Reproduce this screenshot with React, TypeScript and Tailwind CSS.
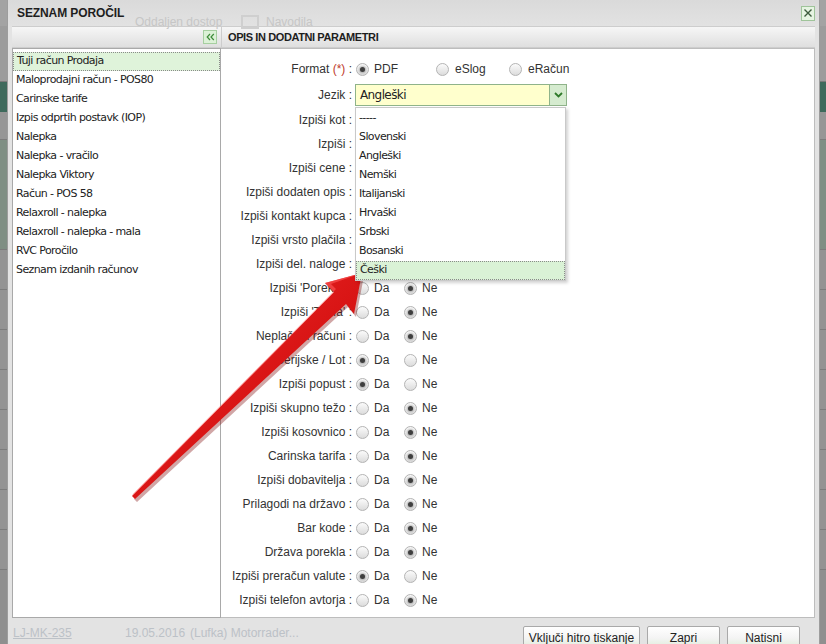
import React from "react";

const leftItems = [
  "Tuji račun Prodaja",
  "Maloprodajni račun - POS80",
  "Carinske tarife",
  "Izpis odprtih postavk (IOP)",
  "Nalepka",
  "Nalepka - vračilo",
  "Nalepka Viktory",
  "Račun - POS 58",
  "Relaxroll - nalepka",
  "Relaxroll - nalepka - mala",
  "RVC Poročilo",
  "Seznam izdanih računov",
];

const languages = [
  "-----",
  "Slovenski",
  "Angleški",
  "Nemški",
  "Italijanski",
  "Hrvaški",
  "Srbski",
  "Bosanski",
  "Češki",
];

// rows whose controls sit under the open dropdown
const hiddenRows = [
  "Izpiši kot",
  "Izpiši",
  "Izpiši cene",
  "Izpiši dodaten opis",
  "Izpiši kontakt kupca",
  "Izpiši vrsto plačila",
  "Izpiši del. naloge",
];

// [label, Da checked]
const rows: [string, boolean][] = [
  ["Izpiši 'Poreklo'", false],
  ["Izpiši 'Tarifa'", false],
  ["Neplačani računi", false],
  ["Serijske / Lot", true],
  ["Izpiši popust", true],
  ["Izpiši skupno težo", false],
  ["Izpiši kosovnico", false],
  ["Carinska tarifa", false],
  ["Izpiši dobavitelja", false],
  ["Prilagodi na državo", false],
  ["Bar kode", false],
  ["Država porekla", false],
  ["Izpiši preračun valute", true],
  ["Izpiši telefon avtorja", false],
];

const listFont = "font-['DejaVu_Sans',sans-serif] text-[11px] tracking-[-0.6px] text-[#222]";

function Radio({ checked }: { checked?: boolean }) {
  return (
    <span className="flex h-[13px] w-[13px] shrink-0 items-center justify-center rounded-full border border-[#b4b4b4] bg-gradient-to-b from-[#fbfbfb] to-[#dcdcdc]">
      {checked && (
        <span className="h-[5px] w-[5px] rounded-full bg-[#3f3f3f] shadow-[0_0_2px_1px_rgba(70,70,70,0.35)]" />
      )}
    </span>
  );
}

function Label({ children }: { children: React.ReactNode }) {
  return <div className="w-[131px] shrink-0 text-right whitespace-nowrap">{children}</div>;
}

function YesNo({ da }: { da: boolean }) {
  return (
    <div className="ml-[4px] flex items-center">
      <div className="flex w-[48px] items-center gap-[5px]">
        <Radio checked={da} />
        <span>Da</span>
      </div>
      <div className="flex items-center gap-[5px]">
        <Radio checked={!da} />
        <span>Ne</span>
      </div>
    </div>
  );
}

function Button({ children, className }: { children: React.ReactNode; className: string }) {
  return (
    <div
      className={`flex h-[24px] items-center justify-center rounded-[2px] border border-[#a9a9a9] bg-gradient-to-b from-[#ffffff] via-[#f4f4f4] to-[#dcebd6] text-[12px] text-[#222] ${className}`}
    >
      {children}
    </div>
  );
}

export default function App() {
  return (
    <div className="relative h-[644px] w-[826px] overflow-hidden bg-[#8f8f8f] font-['Liberation_Sans',Arial,sans-serif]">
      {/* darkened app behind the dialog */}
      <div className="flex flex-col">
        <div className="h-[26px] bg-[#a3a3a3]" />
        <div className="h-[56px] border-b border-[#7a7a7a] bg-[#9c9c9c]" />
        <div className="h-[30px] bg-[#3e6a5c]" />
        <div className="h-[28px] border-b border-[#7c7c7c] bg-[#969696]" />
        <div className="h-[110px] border-b border-[#7c7c7c] bg-[#7f8f84]" />
        <div className="h-[40px] border-b border-[#7c7c7c] bg-[#939393]" />
        <div className="h-[40px] border-b border-[#7c7c7c] bg-[#939393]" />
        <div className="h-[40px] border-b border-[#7c7c7c] bg-[#939393]" />
        <div className="h-[40px] border-b border-[#7c7c7c] bg-[#939393]" />
        <div className="h-[40px] border-b border-[#7c7c7c] bg-[#939393]" />
        <div className="h-[40px] border-b border-[#7c7c7c] bg-[#939393]" />
        <div className="h-[40px] border-b border-[#7c7c7c] bg-[#939393]" />
        <div className="h-[40px] border-b border-[#7c7c7c] bg-[#939393]" />
      </div>

      {/* dialog */}
      <div className="absolute left-[7px] top-0 flex h-[650px] w-[813px] flex-col border-x border-[#9d9d9d] bg-[#e3e3e3]">
        {/* title bar, the app toolbar shows faintly through it */}
        <div className="relative flex h-[26px] shrink-0 items-center justify-between bg-gradient-to-b from-[#dadada] to-[#e2e2e2] pl-[9px] pr-[4px]">
          <div className="absolute left-[127px] top-[13px] flex items-center text-[12px] text-[#c6c6c6]">
            <span className="w-[106px]">Oddaljen dostop</span>
            <span className="mr-[7px] h-[14px] w-[18px] border-2 border-[#cfcfcf]" />
            <span>Navodila</span>
          </div>
          <span className="relative text-[12px] font-bold tracking-[-0.1px] text-[#1e1e1e]">SEZNAM POROČIL</span>
          <span className="relative flex h-[15px] w-[14px] items-center justify-center border border-[#9fc49a] bg-[#e6f4e2]">
            <svg width="10" height="10" viewBox="0 0 10 10">
              <path d="M1.5 1.5 L8.5 8.5 M8.5 1.5 L1.5 8.5" stroke="#3c5a3c" strokeWidth="1.4" />
            </svg>
          </span>
        </div>

        {/* panels */}
        <div className="flex h-[592px] shrink-0 px-[4px]">
          {/* left panel */}
          <div className="flex w-[209px] shrink-0 flex-col">
            <div className="flex h-[22px] shrink-0 items-center justify-end border-y border-[#cdcdcd] bg-gradient-to-b from-[#f6f6f6] to-[#dfdfdf] pr-[4px]">
              <span className="flex h-[14px] w-[14px] items-center justify-center border border-[#a6cfa0] bg-[#dcf1d7]">
                <svg width="9" height="8" viewBox="0 0 9 8">
                  <path d="M4 1 L1.2 4 L4 7 M7.8 1 L5 4 L7.8 7" fill="none" stroke="#3f8c3a" strokeWidth="1.2" />
                </svg>
              </span>
            </div>
            <div className={`flex-1 border border-[#a9a9a9] bg-white pt-[3px] ${listFont}`}>
              {leftItems.map((item, i) => (
                <div
                  key={item}
                  className={`flex h-[19px] items-center px-[3px] ${
                    i === 0 ? "border border-dotted border-[#8a8a8a] bg-[#dff3da] px-[2px]" : ""
                  }`}
                >
                  {item}
                </div>
              ))}
            </div>
          </div>

          {/* right panel */}
          <div className="flex flex-1 flex-col">
            <div className="flex h-[22px] shrink-0 items-center border-y border-l border-[#cdcdcd] bg-gradient-to-b from-[#f6f6f6] to-[#dfdfdf] pl-[6px]">
              <span className="text-[11px] font-bold tracking-[-0.4px] text-[#1e1e1e]">OPIS IN DODATNI PARAMETRI</span>
            </div>
            <div className="relative flex-1 border-y border-r border-[#bdbdbd] bg-white pt-[7px] text-[12px] text-[#333]">
              {/* Format */}
              <div className="flex h-[26px] items-center">
                <Label>
                  Format <span className="text-[#c0392b]">(*)</span> :
                </Label>
                <div className="ml-[4px] flex items-center">
                  <div className="flex w-[80px] items-center gap-[5px]">
                    <Radio checked />
                    <span>PDF</span>
                  </div>
                  <div className="flex w-[73px] items-center gap-[6px]">
                    <Radio />
                    <span>eSlog</span>
                  </div>
                  <div className="flex items-center gap-[6px]">
                    <Radio />
                    <span>eRačun</span>
                  </div>
                </div>
              </div>

              {/* Jezik */}
              <div className="flex h-[26px] items-center">
                <Label>Jezik :</Label>
                <div className="relative ml-[3px]">
                  <div className="flex h-[22px] w-[212px] items-stretch border border-[#8fb38a] bg-[#ffffcd]">
                    <span className={`flex flex-1 items-center px-[4px] !text-[12px] ${listFont}`}>Angleški</span>
                    <span className="flex w-[17px] items-center justify-center border-l border-[#8fb38a] bg-[#d5ebcf]">
                      <svg width="9" height="6" viewBox="0 0 9 6">
                        <path d="M1 1 L4.5 4.5 L8 1" fill="none" stroke="#2f7a2a" strokeWidth="1.8" />
                      </svg>
                    </span>
                  </div>
                  {/* open dropdown */}
                  <div
                    className={`absolute left-0 top-[23px] z-10 w-[211px] border border-[#c9c9c9] bg-white pt-[1px] shadow-[2px_2px_3px_rgba(0,0,0,0.18)] ${listFont}`}
                  >
                    {languages.map((lang, i) => (
                      <div
                        key={lang}
                        className={`flex h-[19px] items-center px-[3px] ${
                          i === languages.length - 1
                            ? "border border-dotted border-[#8a8a8a] bg-[#daf2d6] px-[2px]"
                            : ""
                        }`}
                      >
                        {lang}
                      </div>
                    ))}
                  </div>
                </div>
              </div>

              {hiddenRows.map((label) => (
                <div key={label} className="flex h-[24px] items-center">
                  <Label>{label} :</Label>
                </div>
              ))}

              {rows.map(([label, da]) => (
                <div key={label} className="flex h-[24px] items-center">
                  <Label>{label} :</Label>
                  <YesNo da={da} />
                </div>
              ))}
            </div>
          </div>
        </div>

        {/* footer */}
        <div className="relative flex h-[32px] shrink-0 items-start pt-[8px]">
          <div className="absolute left-[5px] top-[6px] flex items-center text-[12px] text-[#bcc1c7]">
            <span className="w-[112px] underline">LJ-MK-235</span>
            <span className="w-[65px]">19.05.2016</span>
            <span>(Lufka) Motorrader...</span>
          </div>
          <div className="ml-auto flex gap-[7px] pr-[19px]">
            <Button className="w-[117px]">Vključi hitro tiskanje</Button>
            <Button className="w-[73px]">Zapri</Button>
            <Button className="w-[73px]">Natisni</Button>
          </div>
        </div>
      </div>

      {/* red annotation arrow */}
      <svg className="pointer-events-none absolute left-0 top-0" width="826" height="644" viewBox="0 0 826 644">
        <defs>
          <linearGradient id="arrowRed" x1="0" y1="0" x2="1" y2="1">
            <stop offset="0" stopColor="#f03030" />
            <stop offset="0.55" stopColor="#d81414" />
            <stop offset="1" stopColor="#a80808" />
          </linearGradient>
        </defs>
        <polygon
          points="362,273 354,314 346,304 135,499 132,496 334,292 325,283"
          fill="#7a0000"
          opacity="0.35"
          transform="translate(2,3)"
        />
        <polygon points="362,273 354,314 346,304 135,499 132,496 334,292 325,283" fill="url(#arrowRed)" />
        <polygon points="362,273 325,283 334,292 132,496 133,494 336,289 331,284" fill="#ff5a5a" opacity="0.6" />
      </svg>
    </div>
  );
}
